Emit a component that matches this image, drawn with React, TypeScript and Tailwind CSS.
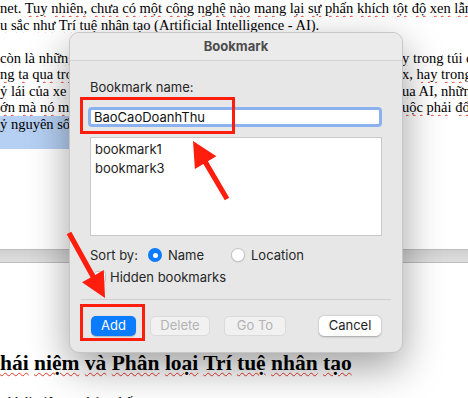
import React from "react";

const serif = { fontFamily: '"Liberation Serif", "Times New Roman", serif' };
const ui = { fontFamily: 'Inter, "Liberation Sans", Arial, sans-serif' };

const plain = new Set(["net.", "(Artificial", "Intelligence", "-", "AI).", "AI,", "x,"]);

// Word-style spell check: red wavy line under every word it does not know
function Marked({ text }: { text: string }) {
  const parts = text.split(" ");
  return (
    <>
      {parts.map((w, i) => (
        <React.Fragment key={i}>
          {w && !plain.has(w) ? (
            <span className="underline decoration-wavy decoration-[#e2382c] decoration-1 underline-offset-2">{w}</span>
          ) : (
            w
          )}
          {i < parts.length - 1 ? " " : ""}
        </React.Fragment>
      ))}
    </>
  );
}

const lines: { left: string; right?: string; selected?: boolean }[] = [
  { left: "net. Tuy nhiên, chưa có một công nghệ nào mang lại sự phấn khích tột độ xen lẫn" },
  { left: "u sắc như Trí tuệ nhân tạo (Artificial Intelligence - AI)." },
  { left: "" },
  { left: "còn là những", right: "y trong túi củ" },
  { left: "ng ta qua trong", right: "x, hay trong" },
  { left: "ỷ lái của xe đ", right: "ua AI, những" },
  { left: "ớn mà nó mang", right: "uộc phải đổi" },
  { left: "ỷ nguyên số", selected: true },
  { left: "", selected: true },
];

function arrow(x1: number, y1: number, x2: number, y2: number, head = 25, half = 12.5, shaft = 2.6) {
  const dx = x2 - x1;
  const dy = y2 - y1;
  const len = Math.hypot(dx, dy);
  const ux = dx / len;
  const uy = dy / len;
  const px = -uy;
  const py = ux;
  const bx = x2 - ux * head;
  const by = y2 - uy * head;
  const pts = [
    [x1 + px * shaft, y1 + py * shaft],
    [bx + px * shaft, by + py * shaft],
    [bx + px * half, by + py * half],
    [x2, y2],
    [bx - px * half, by - py * half],
    [bx - px * shaft, by - py * shaft],
    [x1 - px * shaft, y1 - py * shaft],
  ];
  return pts.map((p) => `${p[0].toFixed(1)},${p[1].toFixed(1)}`).join(" ");
}

function Radio({ on }: { on?: boolean }) {
  return on ? (
    <span className="flex h-[14px] w-[14px] items-center justify-center rounded-full bg-[#0b7bff]">
      <span className="h-[5px] w-[5px] rounded-full bg-white" />
    </span>
  ) : (
    <span className="h-[14px] w-[14px] rounded-full border border-[#c4c4c4] bg-white shadow-[0_0.5px_1px_rgba(0,0,0,0.15)]" />
  );
}

function Dialog() {
  return (
    <div
      style={ui}
      className="absolute left-[69px] top-[32px] flex h-[321px] w-[334px] flex-col overflow-hidden rounded-[10px] border border-[#c6c6c6] bg-[#e7e7e7] shadow-[0_14px_40px_rgba(0,0,0,0.38)]"
    >
      <div className="flex h-[28px] shrink-0 items-center justify-center border-b border-[#d2d2d2] bg-[#ebebeb] text-[13px] font-bold text-[#4d4d4d]">
        Bookmark
      </div>
      <div className="flex flex-col px-5 pt-[18px] text-[13px] text-[#262626]">
        <div className="h-4 leading-4">Bookmark name:</div>
        <div className="-ml-[2px] mt-3 flex h-5 items-center rounded-[4px] border-[3px] border-[#8bb2f0] bg-white pl-[3px] leading-4 text-[#111]">
          BaoCaoDoanhThu
        </div>
        <div className="mt-[10px] h-[99px] border border-[#c9c9c9] bg-white pl-1 pt-[2px] leading-[19px] text-[#222]">
          <div>bookmark1</div>
          <div>bookmark3</div>
        </div>
        <div className="mt-[11px] flex h-4 items-center leading-4">
          <span className="w-[58px]">Sort by:</span>
          <Radio on />
          <span className="ml-[6px] w-[63px]">Name</span>
          <Radio />
          <span className="ml-[6px]">Location</span>
        </div>
        <div className="mt-[6px] flex h-4 items-center pl-1 leading-4">
          <span className="h-[12px] w-[12px] rounded-[3px] border border-[#c4c4c4] bg-white" />
          <span className="ml-[4px]">Hidden bookmarks</span>
        </div>
        <div className="-mx-[9px] mt-[14px] h-px bg-[#d0d0d0]" />
        <div className="mt-[16px] flex h-5 items-center pl-px">
          <button className="flex h-5 w-[45px] items-center justify-center rounded-[5px] bg-[#0b7bff] text-[13px] text-white shadow-[0_0.5px_1px_rgba(0,0,0,0.2)]">
            Add
          </button>
          <button className="ml-[14px] flex h-5 w-[60px] items-center justify-center rounded-[5px] border border-[#dadada] bg-[#f1f1f1] text-[13px] text-[#b3b3b3]">
            Delete
          </button>
          <button className="ml-[14px] flex h-5 w-[62px] items-center justify-center rounded-[5px] border border-[#dadada] bg-[#f1f1f1] text-[13px] text-[#b3b3b3]">
            Go To
          </button>
          <button className="ml-auto mr-[1px] flex h-5 w-[62px] items-center justify-center rounded-[5px] bg-white text-[13px] text-[#1e1e1e] shadow-[0_0.5px_2px_rgba(0,0,0,0.3)]">
            Cancel
          </button>
        </div>
      </div>
    </div>
  );
}

export default function App() {
  return (
    <div className="relative h-[398px] w-[468px] overflow-hidden bg-white">
      {/* document behind the dialog */}
      <div style={serif} className="flex flex-col text-[14.5px] text-black">
        {lines.map((l, i) => (
          <div key={i} className="relative flex h-[16.5px] leading-[16.5px]">
            {l.selected && <div className="absolute left-0 top-0 h-[17px] w-[90px] bg-[#b5d0f3]" />}
            <div className="relative min-w-0 flex-1 overflow-hidden whitespace-nowrap">
              <Marked text={l.left} />
            </div>
            {l.right && (
              <div className="relative w-[66px] shrink-0 overflow-hidden whitespace-nowrap">
                <Marked text={l.right} />
              </div>
            )}
          </div>
        ))}
        <div className="h-[100.5px]" />
        <div className="h-[14px] border-y border-[#bdbdbd] bg-gradient-to-b from-[#d0d0d0] to-[#dedede]" />
        <div className="h-[86px]" />
        <div className="h-7 whitespace-nowrap text-[21.5px] font-bold leading-7">
          <Marked text="hái niệm và Phân loại Trí tuệ nhân tạo" />
        </div>
        <div className="h-[15px]" />
        <div className="h-5 whitespace-nowrap leading-5">
          <Marked text="t khái niệm cơ bản nhất" />
        </div>
      </div>

      <Dialog />

      {/* red annotations */}
      <div className="absolute left-[80px] top-[97px] h-[37px] w-[155px] border-[3px] border-[#ff1e0e]" />
      <div className="absolute left-[80px] top-[304px] h-[37px] w-[65px] border-[3px] border-[#ff1e0e]" />
      <svg className="pointer-events-none absolute left-0 top-0" width="468" height="398">
        <polygon points={arrow(227, 199, 193, 141)} fill="#ff1e0e" />
        <polygon points={arrow(69, 233, 105, 298)} fill="#ff1e0e" />
      </svg>
    </div>
  );
}
